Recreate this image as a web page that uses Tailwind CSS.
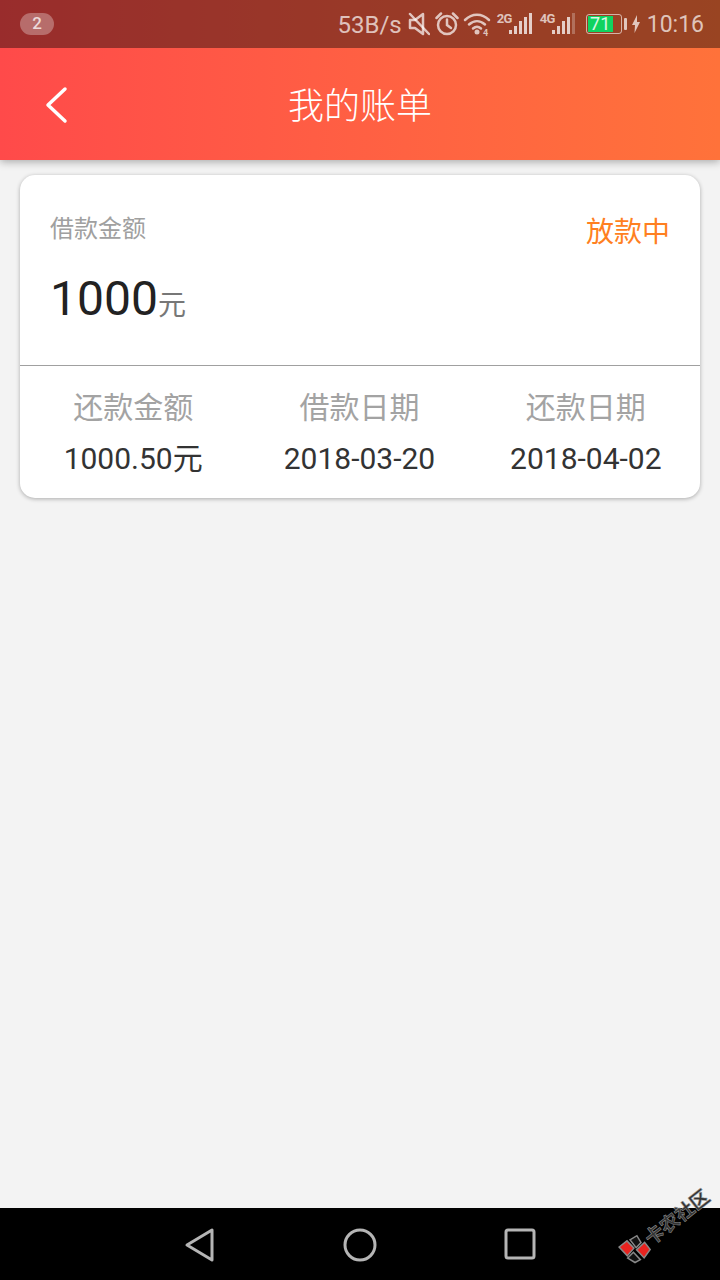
<!DOCTYPE html>
<html lang="en">
<head>
    <meta charset="UTF-8">
    <meta name="viewport" content="width=device-width, initial-scale=1.0">
    <title>我的账单</title>
    <script src="https://cdn.jsdelivr.net/npm/@tailwindcss/browser@4"></script>
</head>
<body class="bg-[#f3f3f3] font-['Roboto','Noto_Sans_CJK_SC',sans-serif]">
<div class="relative flex flex-col w-[720px] h-[1280px] overflow-hidden">

    <!-- Header with status bar on top of the gradient -->
    <header class="bg-gradient-to-r from-[#ff4a4a] to-[#ff723a] h-[160px] shrink-0 shadow-[0_2px_8px_rgba(0,0,0,0.3)] z-10">
        <div class="flex items-center justify-between h-12 pl-5 pr-[16px] bg-black/40">
            <span class="flex items-center justify-center w-[34px] h-[22px] rounded-full bg-white/30 text-white/75 text-[17px] font-medium">2</span>
            <div class="flex items-center text-white/70">
                <span class="mt-[2px] text-[24px]">53B/s</span>
                <!-- muted speaker -->
                <svg class="ml-[4px]" width="24" height="26" viewBox="0 0 24 26" fill="none" stroke="currentColor" stroke-width="2.5">
                    <path d="M4 9v8h5l8 6V3L9 9z" stroke-linejoin="round"/>
                    <path d="M4 3l19 20" stroke-linecap="round"/>
                </svg>
                <!-- alarm -->
                <svg class="ml-[5px]" width="24" height="26" viewBox="0 0 24 26" fill="none" stroke="currentColor" stroke-width="2.5">
                    <circle cx="12" cy="14" r="9"/>
                    <path d="M12 8.500V14l4 3" stroke-linecap="round"/>
                    <path d="M1.500 7L6 2.500M22.500 7L18 2.500" stroke-linecap="round"/>
                </svg>
                <!-- wifi -->
                <svg class="ml-[4px]" width="30" height="26" viewBox="0 0 30 26" fill="none" stroke="currentColor" stroke-width="2.500" stroke-linecap="round">
                    <path d="M2 9c7-7 17-7 24 0"/>
                    <path d="M6 13.500c5-4.500 11-4.500 16 0"/>
                    <path d="M10 17.500c3-2.500 5-2.500 8 0"/>
                    <circle cx="14" cy="21" r="2.500" fill="currentColor" stroke="none"/>
                    <text x="20" y="25" font-size="9" font-weight="700" fill="currentColor" stroke="none">4</text>
                </svg>
                <!-- 2G signal -->
                <div class="relative ml-[4px] w-[35px] h-[26px]">
                    <span class="absolute left-0 top-[1px] text-[13px] font-bold leading-none tracking-[-0.8px]">2G</span>
                    <div class="absolute left-[12px] bottom-[3px] flex items-end gap-[2px]">
                        <i class="w-[3px] h-[4px] bg-white/75"></i>
                        <i class="w-[3px] h-[8px] bg-white/75"></i>
                        <i class="w-[3px] h-[13px] bg-white/75"></i>
                        <i class="w-[3px] h-[17px] bg-white/75"></i>
                        <i class="w-[3px] h-[21px] bg-white/75"></i>
                    </div>
                </div>
                <!-- 4G signal -->
                <div class="relative ml-[8px] w-[35px] h-[26px]">
                    <span class="absolute left-0 top-[1px] text-[13px] font-bold leading-none tracking-[-0.8px]">4G</span>
                    <div class="absolute left-[12px] bottom-[3px] flex items-end gap-[2px]">
                        <i class="w-[3px] h-[4px] bg-white/75"></i>
                        <i class="w-[3px] h-[8px] bg-white/75"></i>
                        <i class="w-[3px] h-[13px] bg-white/75"></i>
                        <i class="w-[3px] h-[17px] bg-white/75"></i>
                        <i class="w-[3px] h-[21px] bg-white/25"></i>
                    </div>
                </div>
                <!-- battery -->
                <div class="ml-[11px] flex items-center">
                    <div class="flex items-center w-[36px] h-[20px] p-[1px] border border-white/60 rounded-[3px]">
                        <div class="flex items-center justify-center w-[25px] h-full bg-[#0fd35f] text-white/85 text-[18px] leading-none">71</div>
                    </div>
                    <i class="ml-[2px] w-[3px] h-[12px] bg-white/70 rounded-[1px]"></i>
                </div>
                <svg class="ml-[5px]" width="8" height="18" viewBox="0 0 8 18" fill="currentColor">
                    <path d="M5 0L0 10h3L2.500 18 8 7H5z"/>
                </svg>
                <span class="mt-[2px] ml-[7px] text-[23px]">10:16</span>
            </div>
        </div>
        <div class="relative flex items-center justify-center h-[112px]">
            <svg class="absolute left-[45px] top-[38px]" width="24" height="38" viewBox="0 0 24 38" fill="none" stroke="white" stroke-width="3.500" stroke-linecap="round" stroke-linejoin="round">
                <path d="M20 3L3 19l17 16"/>
            </svg>
            <h1 class="mt-[5px] text-white text-[36px] font-light">我的账单</h1>
        </div>
    </header>

    <main class="flex-1 px-5 pt-[15px]">
        <section class="bg-white rounded-[15px] shadow-[0_1px_4px_rgba(0,0,0,0.3)] h-[323px]">
            <div class="flex justify-between h-[191px] border-b border-[#a0a0a0] pl-[30px] pr-[30px]">
                <div>
                    <p class="mt-[36px] text-[24px] leading-[36px] text-[#a0a0a0]">借款金额</p>
                    <p class="mt-[22px] flex items-baseline text-[#222] text-[48px] leading-[60px]">1000<span class="text-[28px] text-[#777]">元</span></p>
                </div>
                <p class="mt-[38px] text-[28px] leading-[40px] text-[#ff7f21]">放款中</p>
            </div>
            <div class="grid grid-cols-3 pr-[1px] pt-[21px] text-center">
                <div>
                    <p class="text-[30px] leading-[42px] text-[#a3a3a3]">还款金额</p>
                    <p class="mt-[9px] text-[30px] leading-[42px] text-[#333]">1000.50元</p>
                </div>
                <div>
                    <p class="text-[30px] leading-[42px] text-[#a3a3a3]">借款日期</p>
                    <p class="mt-[9px] text-[30px] leading-[42px] text-[#333]">2018-03-20</p>
                </div>
                <div>
                    <p class="text-[30px] leading-[42px] text-[#a3a3a3]">还款日期</p>
                    <p class="mt-[9px] text-[30px] leading-[42px] text-[#333]">2018-04-02</p>
                </div>
            </div>
        </section>
    </main>

    <!-- Navigation bar -->
    <nav class="relative h-[72px] shrink-0 bg-black">
        <svg class="absolute left-[184px] top-[19px]" width="32" height="36" viewBox="0 0 32 36" fill="none" stroke="#b5b5b5" stroke-width="3" stroke-linejoin="round">
            <path d="M28 3v30L3 18z"/>
        </svg>
        <svg class="absolute left-[342px] top-[19px]" width="36" height="36" viewBox="0 0 36 36" fill="none" stroke="#b5b5b5" stroke-width="3">
            <circle cx="18" cy="18" r="15"/>
        </svg>
        <svg class="absolute left-[504px] top-[20px]" width="32" height="32" viewBox="0 0 32 32" fill="none" stroke="#b5b5b5" stroke-width="3">
            <rect x="2" y="2" width="28" height="28" rx="2"/>
        </svg>
    </nav>

    <!-- Forum stamp across the corner -->
    <div class="absolute left-[613px] top-[1212px] flex items-center whitespace-nowrap -rotate-[38deg]">
        <svg width="28" height="28" viewBox="0 0 28 28">
            <path d="M3 2l10 0 1 10-10 2z" fill="#e8231f" stroke="#888" stroke-width="1.500"/>
            <path d="M15 15l11-1 0 9-10 3z" fill="#e8231f" stroke="#888" stroke-width="1.500"/>
            <path d="M3 16l8-1 1 10-6-1z" fill="#111" stroke="#888" stroke-width="1.500"/>
            <path d="M16 3l8 1-1 8-7 1z" fill="#111" stroke="#888" stroke-width="1.500"/>
        </svg>
        <span class="ml-[1px] text-[19px] leading-none font-bold text-[#333] [-webkit-text-stroke:0.5px_#999]">卡农社区</span>
    </div>
</div>
</body>
</html>
